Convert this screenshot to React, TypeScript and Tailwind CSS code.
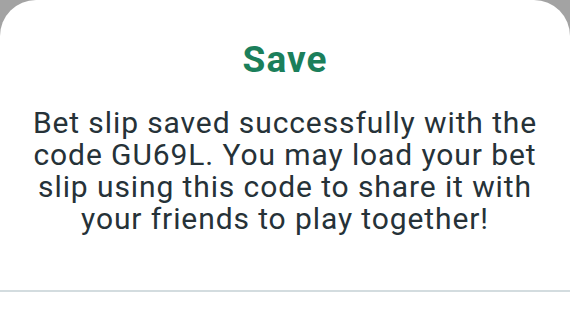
export default function App() {
  return (
    <div className="h-[316px] w-[570px] overflow-hidden bg-[#a3a3a3]" style={{ fontFamily: 'Roboto, "Liberation Sans", sans-serif' }}>
      <div className="flex h-full flex-col rounded-t-[36px] bg-white">
        <h1 className="pt-[38px] text-center text-[37px] font-bold leading-[44px] tracking-[1px] text-[#1b7f5b]">Save</h1>
        <p className="mt-[25px] px-[16px] text-center text-[30px] leading-[32px] tracking-[0.9px] text-[#263238]">
          Bet slip saved successfully with the code GU69L. You may load your bet slip using this code to share it with your friends to play together!
        </p>
        <div className="mt-auto mb-[24px] h-[2px] bg-[#d3dcdf]" />
      </div>
    </div>
  );
}
